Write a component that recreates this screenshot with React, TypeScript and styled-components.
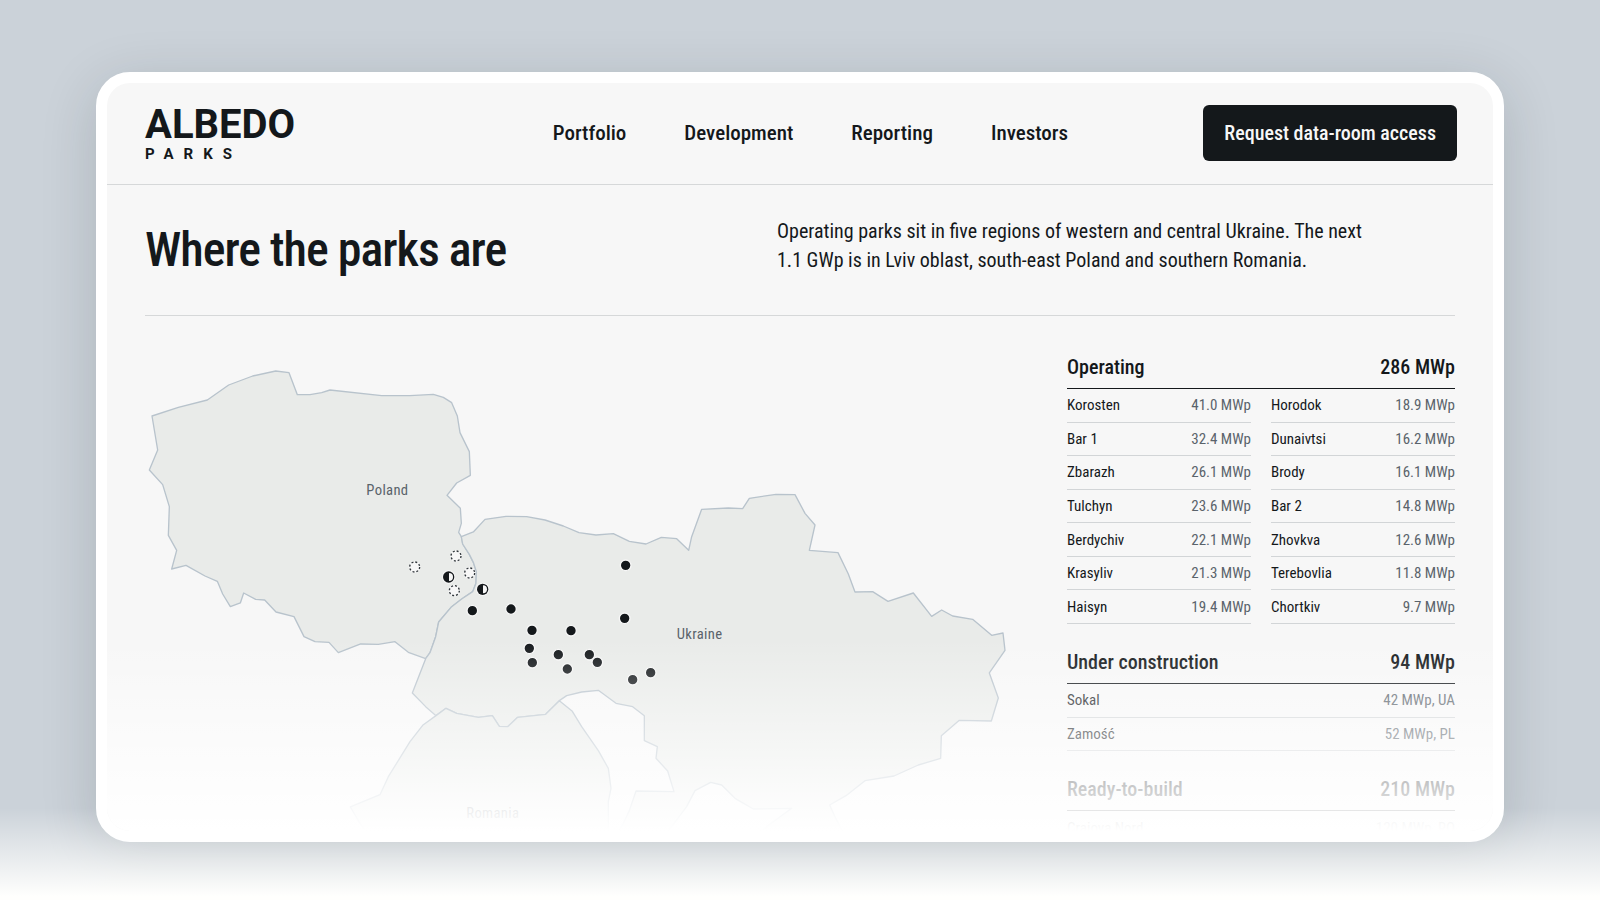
import React from "react";
import styled, { createGlobalStyle } from "styled-components";

const ink = "#14181b";
const condensed = `"Roboto Condensed", Roboto, "Liberation Sans", sans-serif`;

const GlobalStyle = createGlobalStyle`
  *, *::before, *::after { box-sizing: border-box; }
  body {
    margin: 0;
    background: #cbd2d9;
    color: ${ink};
    font-family: ${condensed};
  }
`;

const Page = styled.div`
  position: relative;
  display: flex;
  height: 100vh;
  padding: 72px 6% 58px;
  overflow: hidden;
`;

const PageFade = styled.div`
  position: absolute;
  inset: auto 0 0;
  height: 92px;
  background: linear-gradient(rgba(255, 255, 253, 0), #fffffd 96%);
`;

const CardShadow = styled.div`
  display: flex;
  flex: 1;
  min-width: 0;
  border-radius: 34px;
  box-shadow: 0 12px 56px rgba(20, 28, 36, 0.16);
`;

const Card = styled.div`
  position: relative;
  z-index: 1;
  flex: 1;
  min-width: 0;
  border: 11px solid #fff;
  border-radius: 34px;
  background: #f7f7f7;
  overflow: hidden;
`;

const CardFade = styled.div`
  position: absolute;
  inset: auto 0 0;
  height: 192px;
  background: linear-gradient(rgba(255, 255, 254, 0), #fff);
  pointer-events: none;
`;

const Header = styled.header`
  display: grid;
  grid-template-columns: 408fr 651fr auto;
  align-items: center;
  height: 102px;
  padding: 0 36px 2px 38px;
  border-bottom: 1px solid #d6d8d9;
`;

const Logo = styled.a`
  display: flex;
  flex-direction: column;
  padding-top: 2px;
  color: ${ink};
  font-family: Roboto, "Liberation Sans", sans-serif;
  font-weight: 700;
  text-decoration: none;
`;

const LogoName = styled.span`
  font-size: 40px;
  line-height: 40px;
`;

const LogoTag = styled.span`
  font-size: 15px;
  line-height: 18px;
  letter-spacing: 10px;
`;

const Nav = styled.nav`
  display: flex;
  gap: 58px;
`;

const NavLink = styled.a`
  color: ${ink};
  font-size: 21px;
  font-weight: 500;
  line-height: 28px;
  text-decoration: none;
`;

const AccessButton = styled.button`
  height: 56px;
  padding: 0 21px;
  border: 0;
  border-radius: 6px;
  background: ${ink};
  color: #f7f7f7;
  font: 500 20px/28px ${condensed};
`;

const Intro = styled.section`
  display: grid;
  grid-template-columns: 632fr 678fr;
  align-items: center;
  height: 131px;
  margin: 0 38px;
  padding-bottom: 8px;
  border-bottom: 1px solid #d6d8d9;
`;

const Title = styled.h1`
  margin: 8px 0 0;
  font-size: 48px;
  font-weight: 500;
  line-height: 56px;
  letter-spacing: -1px;
`;

const Lead = styled.p`
  max-width: 600px;
  margin: 0;
  font-size: 20px;
  line-height: 29px;
`;

const Content = styled.main`
  display: grid;
  grid-template-columns: 1fr 388px;
  align-items: start;
  gap: 44px;
  margin: 0 38px;
  padding-top: 33px;
`;

const MapSvg = styled.svg`
  display: block;
  width: 100%;
  height: auto;
`;

const MapLabel = styled.text`
  fill: #5a636b;
  font-family: ${condensed};
  font-size: 44px;
  letter-spacing: 1px;
`;

const Stages = styled.div`
  display: flex;
  flex-direction: column;
  gap: 20px;
`;

const StageHead = styled.div`
  display: flex;
  align-items: center;
  justify-content: space-between;
  height: 40px;
  padding-bottom: 4px;
  border-bottom: 1px solid ${ink};
`;

const StageTitle = styled.h2`
  margin: 0;
  font-size: 20px;
  font-weight: 500;
  line-height: 28px;
`;

const StageTotal = styled.span`
  font-size: 20px;
  font-weight: 500;
  line-height: 28px;
`;

const Columns = styled.div`
  display: flex;
  gap: 20px;
`;

const ParkTable = styled.table<{ $height: number }>`
  flex: 1;
  width: 100%;
  height: ${(p) => p.$height}px;
  border-collapse: separate;
  border-spacing: 0;
  font-size: 15px;
  line-height: 20px;
`;

const ParkName = styled.th`
  padding: 0;
  border-bottom: 1px solid #d2d5d7;
  font-weight: 400;
  text-align: left;
`;

const ParkPower = styled.td`
  padding: 0;
  border-bottom: 1px solid #d2d5d7;
  color: #5a636b;
  text-align: right;
`;

type Park = [name: string, power: string];

const stages: { title: string; total: string; height: number; columns: Park[][] }[] = [
  {
    title: "Operating",
    total: "286 MWp",
    height: 235,
    columns: [
      [
        ["Korosten", "41.0 MWp"],
        ["Bar 1", "32.4 MWp"],
        ["Zbarazh", "26.1 MWp"],
        ["Tulchyn", "23.6 MWp"],
        ["Berdychiv", "22.1 MWp"],
        ["Krasyliv", "21.3 MWp"],
        ["Haisyn", "19.4 MWp"],
      ],
      [
        ["Horodok", "18.9 MWp"],
        ["Dunaivtsi", "16.2 MWp"],
        ["Brody", "16.1 MWp"],
        ["Bar 2", "14.8 MWp"],
        ["Zhovkva", "12.6 MWp"],
        ["Terebovlia", "11.8 MWp"],
        ["Chortkiv", "9.7 MWp"],
      ],
    ],
  },
  {
    title: "Under construction",
    total: "94 MWp",
    height: 67,
    columns: [
      [
        ["Sokal", "42 MWp, UA"],
        ["Zamość", "52 MWp, PL"],
      ],
    ],
  },
  {
    title: "Ready-to-build",
    total: "210 MWp",
    height: 34,
    columns: [[["Craiova Nord", "120 MWp, RO"]]],
  },
];

const countries = [
  "66,198 145,172 232,150 296,105 368,78 437,63 477,68 502,134 540,134 575,128 600,120 755,137 840,137 910,133 940,142 965,158 982,198 990,248 1018,305 1021,376 980,399 951,436 991,475 994,520 986,547 994,560 998,582 1018,613 1030,637 1039,665 1038,700 1028,725 995,747 965,770 926,816 917,860 900,908 887,926 835,907 795,875 745,883 692,882 625,908 597,877 555,875 522,860 492,800 438,786 404,750 377,748 341,729 331,759 301,770 278,732 262,694 225,678 168,646 125,657 140,601 115,556 118,470 98,404 58,360 83,300",
  "994,560 1030,546 1065,508 1128,499 1190,500 1245,510 1300,528 1347,548 1398,555 1450,551 1498,574 1548,582 1594,562 1640,566 1676,601 1685,560 1715,478 1795,474 1838,476 1858,445 1938,433 1995,434 2025,490 2055,525 2038,601 2124,608 2155,672 2175,726 2228,725 2274,754 2350,729 2405,799 2435,780 2468,798 2528,808 2585,856 2619,849 2625,901 2578,969 2605,1044 2584,1113 2488,1111 2434,1157 2432,1225 2365,1245 2292,1278 2205,1292 2148,1337 2099,1365 2115,1400 2160,1490 1840,1490 1910,1430 1985,1375 1870,1377 1815,1345 1775,1305 1742,1297 1695,1322 1670,1370 1630,1423 1580,1490 1440,1490 1480,1420 1498,1382 1518,1323 1632,1325 1613,1263 1578,1225 1582,1190 1543,1172 1543,1097 1508,1070 1458,1060 1405,1021 1355,1026 1310,1037 1288,1052 1247,1093 1163,1102 1133,1130 1108,1129 1087,1097 1045,1102 980,1090 948,1075 918,1097 887,1070 847,1029 887,926 900,908 917,860 926,816 965,770 995,747 1028,725 1038,700 1039,665 1030,637 1018,613 998,582",
  "918,1097 948,1075 980,1090 1045,1102 1087,1097 1108,1129 1133,1130 1163,1102 1247,1093 1288,1052 1327,1084 1355,1130 1405,1202 1435,1255 1443,1315 1435,1355 1435,1490 740,1490 690,1420 661,1371 750,1334 775,1280 840,1175 878,1126",
];

const operating = [
  [1027, 782], [1143, 777], [1206, 841], [1323, 842], [1198, 895], [1207, 938], [1285, 914],
  [1312, 957], [1378, 914], [1402, 937], [1487, 646], [1484, 805], [1508, 989], [1562, 968],
];
const building = [[956, 681], [1058, 718]];
const planned = [[978, 618], [854, 651], [1019, 669], [973, 722]];

function ParkMap() {
  return (
    <MapSvg viewBox="45 -3 2634 1490" role="img" aria-label="Map of parks in Poland, Ukraine and Romania">
      {countries.map((points) => (
        <polygon key={points} points={points} fill="#e9ebe9" stroke="#b8c3cc" strokeWidth="4" strokeLinejoin="round" />
      ))}
      <MapLabel x="709" y="435">Poland</MapLabel>
      <MapLabel x="1640" y="866">Ukraine</MapLabel>
      <MapLabel x="1009" y="1405">Romania</MapLabel>
      {planned.map(([x, y]) => (
        <g key={`${x}-${y}`}>
          <circle cx={x} cy={y} r="18" fill="#f7f7f7" />
          <circle cx={x} cy={y} r="15" fill="none" stroke="#30363b" strokeWidth="4" strokeDasharray="6 5.8" />
        </g>
      ))}
      {building.map(([x, y]) => (
        <g key={`${x}-${y}`}>
          <circle cx={x} cy={y} r="20" fill="#f7f7f7" />
          <circle cx={x} cy={y} r="17" fill={ink} />
          <path d={`M${x + 1} ${y - 12}a12 12 0 0 1 0 24z`} fill="#f7f7f7" />
        </g>
      ))}
      {operating.map(([x, y]) => (
        <circle key={`${x}-${y}`} cx={x} cy={y} r="16" fill={ink} stroke="#f7f7f7" strokeWidth="4" />
      ))}
    </MapSvg>
  );
}

export default function App() {
  return (
    <Page>
      <GlobalStyle />
      <CardShadow>
        <Card>
          <Header>
            <Logo href="#">
              <LogoName>ALBEDO</LogoName>
              <LogoTag>PARKS</LogoTag>
            </Logo>
            <Nav>
              {["Portfolio", "Development", "Reporting", "Investors"].map((item) => (
                <NavLink key={item} href="#">{item}</NavLink>
              ))}
            </Nav>
            <AccessButton type="button">Request data-room access</AccessButton>
          </Header>
          <Intro>
            <Title>Where the parks are</Title>
            <Lead>
              Operating parks sit in five regions of western and central Ukraine. The next 1.1 GWp is in Lviv oblast,
              south-east Poland and southern Romania.
            </Lead>
          </Intro>
          <Content>
            <ParkMap />
            <Stages>
              {stages.map((stage) => (
                <section key={stage.title}>
                  <StageHead>
                    <StageTitle>{stage.title}</StageTitle>
                    <StageTotal>{stage.total}</StageTotal>
                  </StageHead>
                  <Columns>
                    {stage.columns.map((parks, i) => (
                      <ParkTable key={i} $height={stage.height} aria-label={stage.title}>
                        <tbody>
                          {parks.map(([name, power]) => (
                            <tr key={name}>
                              <ParkName scope="row">{name}</ParkName>
                              <ParkPower>{power}</ParkPower>
                            </tr>
                          ))}
                        </tbody>
                      </ParkTable>
                    ))}
                  </Columns>
                </section>
              ))}
            </Stages>
          </Content>
          <CardFade />
        </Card>
      </CardShadow>
      <PageFade />
    </Page>
  );
}
